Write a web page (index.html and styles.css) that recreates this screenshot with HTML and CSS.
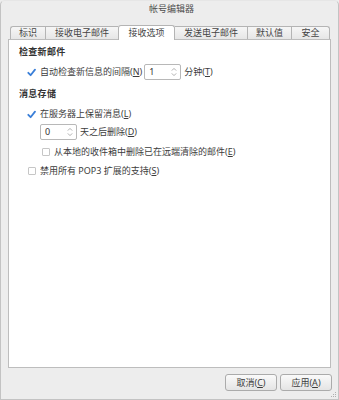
FILE: index.html
```html
<!DOCTYPE html>
<html lang="zh-CN">
<head>
<meta charset="utf-8">
<title>帐号编辑器</title>
<link rel="stylesheet" href="styles.css">
</head>
<body>
<div class="window">
  <div class="titlebar"><span class="title">帐号编辑器</span></div>
  <div class="tabs">
    <div class="tab left first t1">标识</div>
    <div class="tab left t2">接收电子邮件</div>
    <div class="tab active t3">接收选项</div>
    <div class="tab right t4">发送电子邮件</div>
    <div class="tab right t5">默认值</div>
    <div class="tab right last t6">安全</div>
  </div>
  <div class="panel">
    <div class="heading h1">检查新邮件</div>
    <div class="row r1">
      <span class="cb checked"><svg viewBox="0 0 9 9" width="9" height="9"><path d="M1.3 4.8 L3.6 7.2 L8 1.6" fill="none" stroke="#3a7fd8" stroke-width="1.8" stroke-linecap="round" stroke-linejoin="round"/></svg></span>
      <span class="label">自动检查新信息的间隔(<u>N</u>)</span>
      <span class="spin s1"><span class="val">1</span><svg class="arrows" viewBox="0 0 6 10" width="6" height="10"><path d="M0.8 3.6 L3 1.4 L5.2 3.6 M0.8 6.4 L3 8.6 L5.2 6.4" fill="none" stroke="#a6a6a6" stroke-width="0.9"/></svg></span>
      <span class="label after">分钟(<u>T</u>)</span>
    </div>
    <div class="heading h2">消息存储</div>
    <div class="row r2">
      <span class="cb checked"><svg viewBox="0 0 9 9" width="9" height="9"><path d="M1.3 4.8 L3.6 7.2 L8 1.6" fill="none" stroke="#3a7fd8" stroke-width="1.8" stroke-linecap="round" stroke-linejoin="round"/></svg></span>
      <span class="label">在服务器上保留消息(<u>L</u>)</span>
    </div>
    <div class="row r3">
      <span class="spin s2"><span class="val">0</span><svg class="arrows" viewBox="0 0 6 10" width="6" height="10"><path d="M0.8 3.6 L3 1.4 L5.2 3.6 M0.8 6.4 L3 8.6 L5.2 6.4" fill="none" stroke="#a6a6a6" stroke-width="0.9"/></svg></span>
      <span class="label after">天之后删除(<u>D</u>)</span>
    </div>
    <div class="row r4">
      <span class="cb"><span class="box"></span></span>
      <span class="label">从本地的收件箱中删除已在远端清除的邮件(<u>E</u>)</span>
    </div>
    <div class="row r5">
      <span class="cb"><span class="box"></span></span>
      <span class="label">禁用所有 POP3 扩展的支持(<u>S</u>)</span>
    </div>
  </div>
  <div class="footer">
    <button class="btn">取消(<u>C</u>)</button>
    <button class="btn">应用(<u>A</u>)</button>
  </div>
  <svg class="grip" viewBox="0 0 6 6" width="6" height="6"><g fill="#b0b0b0"><rect x="4" y="0" width="1" height="1"/><rect x="2" y="2" width="1" height="1"/><rect x="4" y="2" width="1" height="1"/><rect x="0" y="4" width="1" height="1"/><rect x="2" y="4" width="1" height="1"/><rect x="4" y="4" width="1" height="1"/></g></svg>
</div>
</body>
</html>
```
FILE: styles.css
```css
html, body {
  margin: 0;
  padding: 0;
  background: #ededed;
}
body {
  width: 339px;
  height: 400px;
  overflow: hidden;
  font-family: "Noto Sans", "Noto Sans CJK SC", sans-serif;
  font-size: 9px;
  color: #3c3c3c;
}
.window {
  position: relative;
  box-sizing: border-box;
  width: 339px;
  height: 400px;
  border: 1px solid #c3c3c3;
  border-top-color: #e6e6e6;
  border-radius: 5px 5px 0 0;
  background: #ededed;
  display: flex;
  flex-direction: column;
}
.titlebar {
  height: 24px;
  display: flex;
  justify-content: center;
}
.title {
  line-height: 16px;
  color: #4e4e4e;
  padding-left: 4px;
}
.tabs {
  display: flex;
  align-items: flex-end;
  height: 14px;
  margin-left: 9px;
  position: relative;
  z-index: 1;
}
.tab {
  box-sizing: border-box;
  height: 13px;
  line-height: 12px;
  text-align: center;
  background: linear-gradient(#f6f6f6, #e6e6e6);
  border-top: 1px solid #b4b4b4;
  color: #444;
  white-space: nowrap;
}
.t1 { width: 35px; }
.t2 { width: 73px; }
.t3 { width: 57px; }
.t4 { width: 73px; }
.t5 { width: 44px; }
.t6 { width: 38px; }
.tab.left {
  border-left: 1px solid #b4b4b4;
}
.tab.right {
  border-right: 1px solid #b4b4b4;
}
.tab.first {
  border-radius: 3px 0 0 0;
}
.tab.last {
  border-radius: 0 3px 0 0;
}
.tab.active {
  height: 15px;
  margin-bottom: -1px;
  line-height: 13px;
  background: #ffffff;
  border: 1px solid #b4b4b4;
  border-bottom: none;
  border-radius: 3px 3px 0 0;
}
.panel {
  box-sizing: border-box;
  margin-left: 7px;
  width: 323px;
  height: 329px;
  background: #ffffff;
  border: 1px solid #bdbdbd;
  padding-left: 10px;
}
.heading {
  font-weight: bold;
  line-height: 12px;
  color: #333;
  letter-spacing: 0.3px;
}
.h1 { margin-top: 6px; }
.h2 { margin-top: 8px; }
.row {
  display: flex;
  align-items: center;
  margin-left: 8px;
  line-height: 12px;
  white-space: nowrap;
}
.r1 { margin-top: 6px; height: 16px; }
.r2 { margin-top: 8px; height: 12px; }
.r3 { margin-top: 4px; height: 16px; padding-left: 13px; }
.r4 { margin-top: 6px; height: 12px; padding-left: 14px; }
.r5 { margin-top: 7px; height: 12px; }
.cb {
  width: 9px;
  height: 9px;
  margin-right: 4px;
  display: flex;
  align-items: center;
  justify-content: center;
}
.cb svg { display: block; }
.box {
  box-sizing: border-box;
  width: 8px;
  height: 8px;
  border: 1px solid #c6c6c6;
  border-radius: 1px;
  background: #fff;
}
.spin {
  box-sizing: border-box;
  width: 37px;
  height: 16px;
  border: 1px solid #b8b8b8;
  border-radius: 2px;
  background: #fff;
  display: flex;
  align-items: center;
  justify-content: space-between;
  padding: 0 3px 0 4px;
  color: #333;
}
.s1 { margin-left: 2px; }
.arrows { display: block; }
.after { margin-left: 3px; }
.footer {
  display: flex;
  justify-content: flex-end;
  gap: 3px;
  padding: 6px 6px 0 0;
}
.btn {
  box-sizing: border-box;
  width: 52px;
  height: 17px;
  padding: 0;
  font-family: inherit;
  font-size: 9px;
  color: #3c3c3c;
  background: linear-gradient(#fafafa, #e4e4e4);
  border: 1px solid #ababab;
  border-radius: 3px;
  line-height: 15px;
}
.grip {
  position: absolute;
  right: 1px;
  bottom: 1px;
}
```
